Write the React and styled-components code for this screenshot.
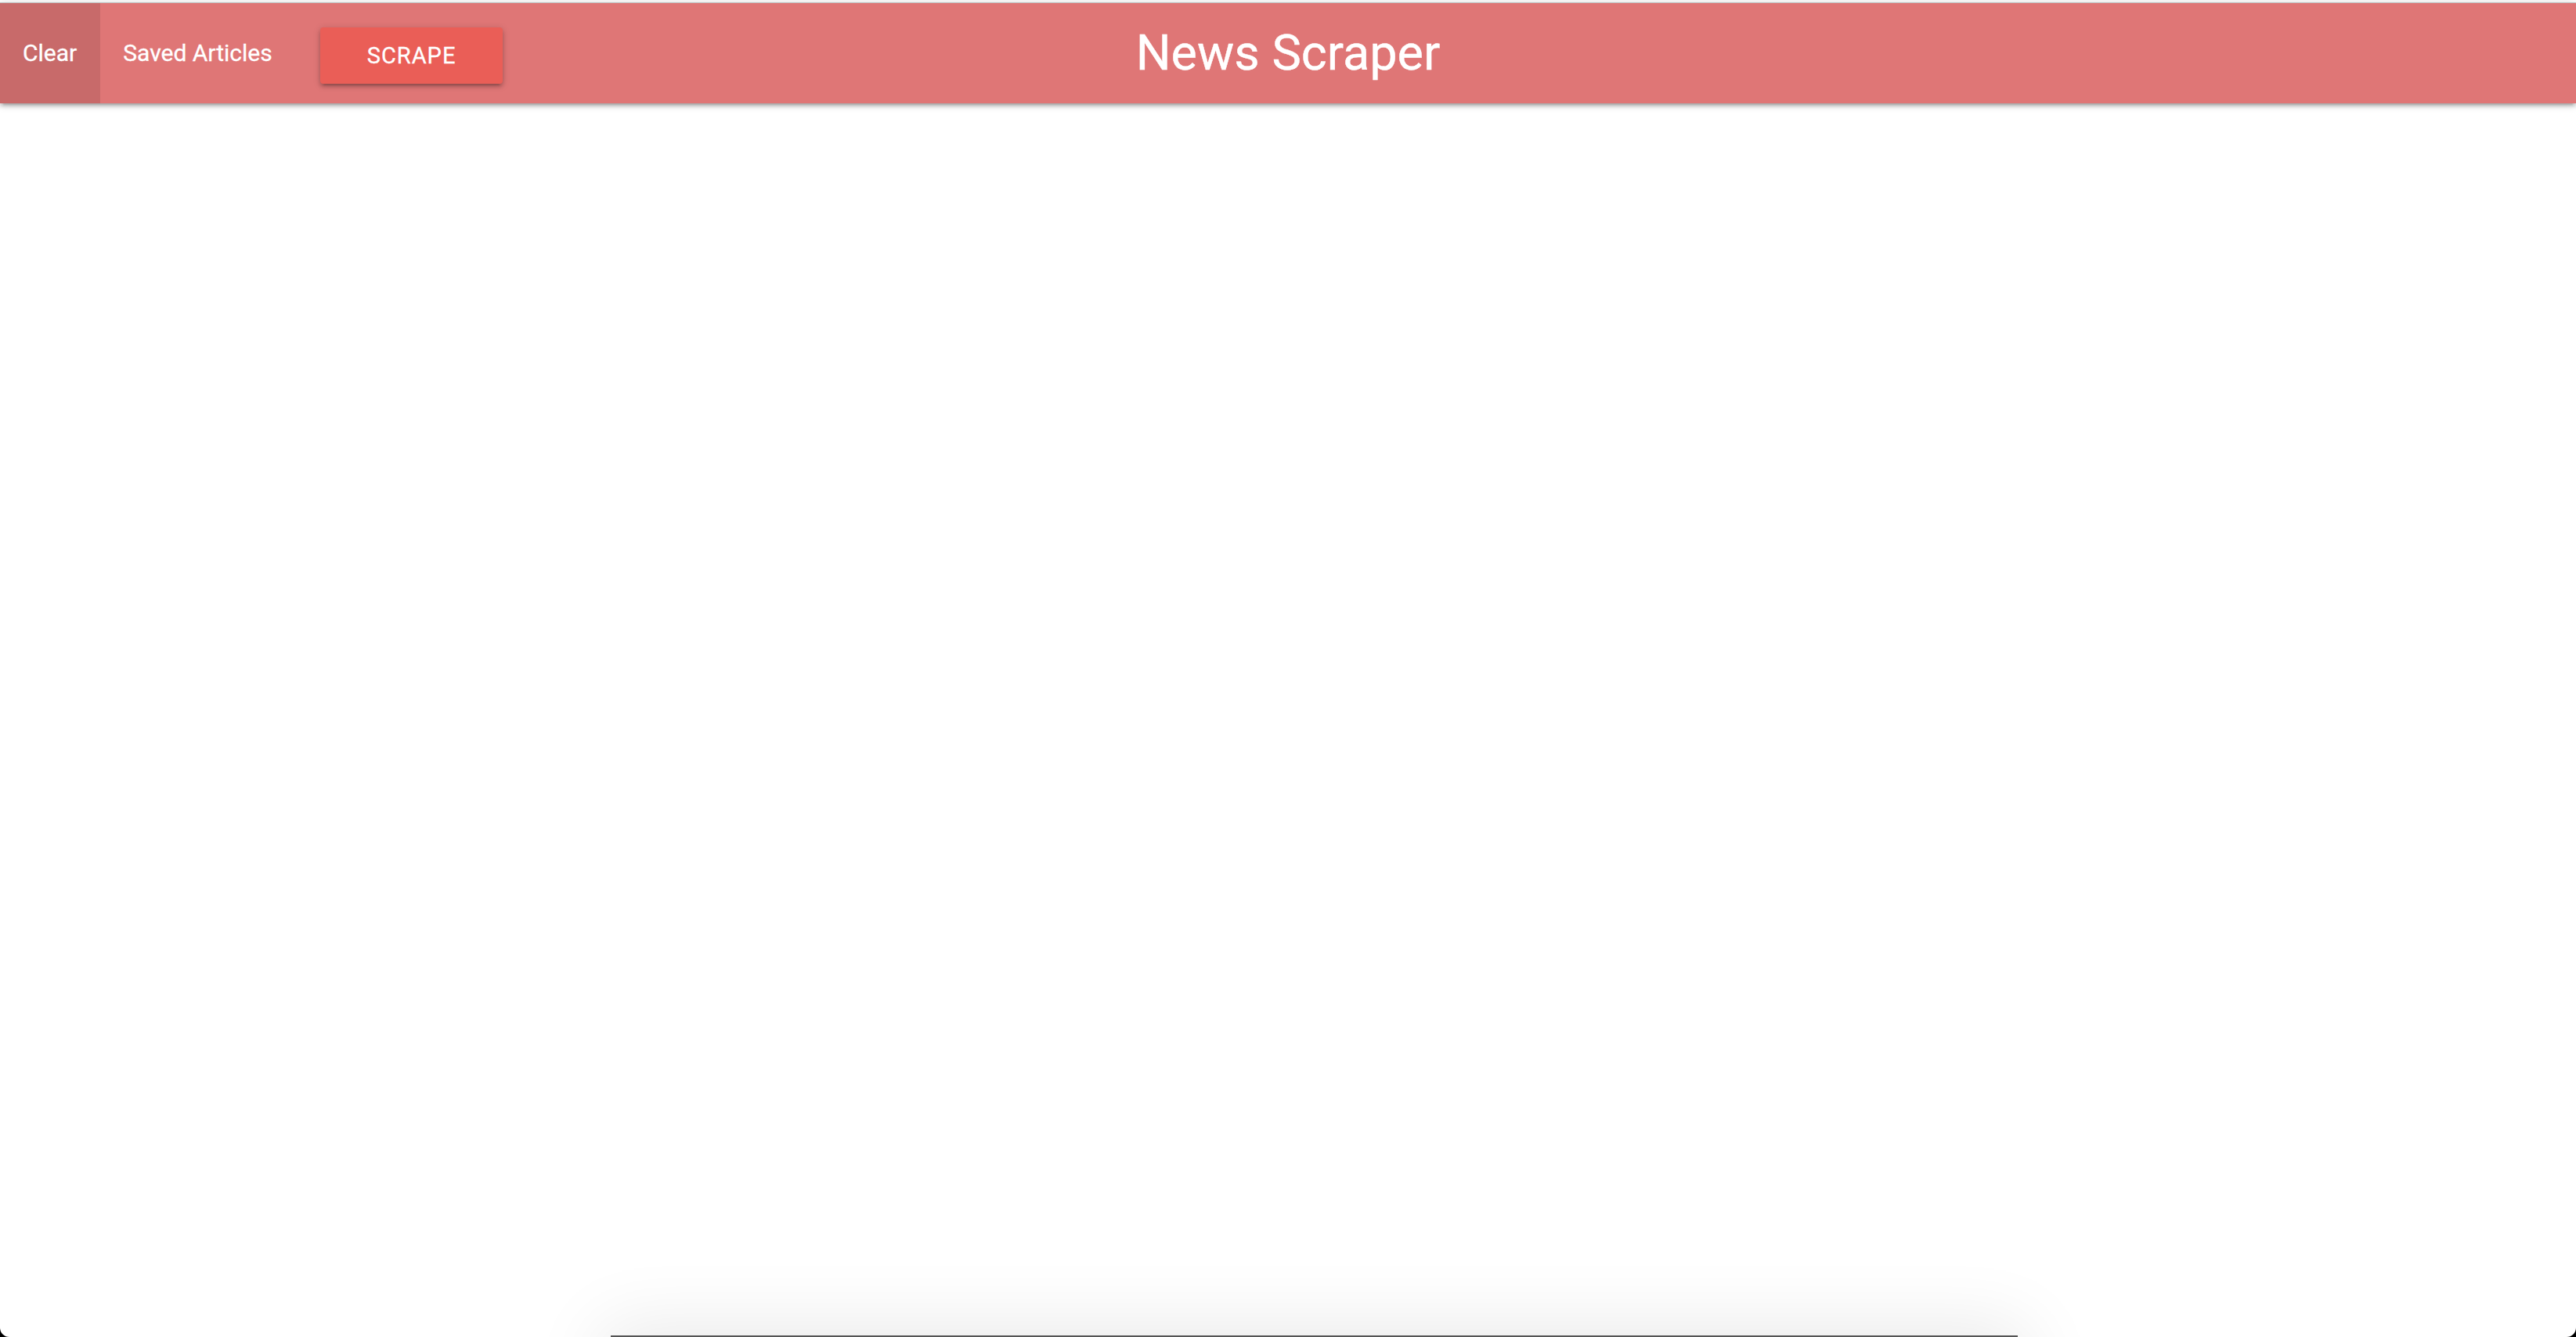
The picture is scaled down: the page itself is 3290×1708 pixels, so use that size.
import React from 'react';
import styled, { createGlobalStyle } from 'styled-components';

const GlobalStyle = createGlobalStyle`
  html, body {
    margin: 0;
    padding: 0;
    background: #ffffff;
    font-family: Roboto, "Liberation Sans", sans-serif;
    overflow: hidden;
  }
`;

const Page = styled.div`
  min-height: 100vh;
  padding-top: 3px;
  box-sizing: border-box;
`;

const Nav = styled.nav`
  display: grid;
  grid-template-columns: 1fr auto 1fr;
  align-items: center;
  height: 128px;
  border-top: 1px solid #bdbdbd;
  background-color: #df7676;
  color: #ffffff;
  box-shadow: 0 4px 4px 0 rgba(0, 0, 0, 0.14), 0 6px 2px -4px rgba(0, 0, 0, 0.12),
    0 2px 10px 0 rgba(0, 0, 0, 0.2);
`;

const Links = styled.ul`
  display: flex;
  align-items: center;
  height: 100%;
  margin: 0;
  padding: 0;
  list-style: none;
`;

const Item = styled.li`
  display: flex;
  align-items: center;
  height: 100%;
  padding: 0 ${p => (p.$wrap ? '31px' : '0')};
  background-color: ${p => (p.$active ? 'rgba(0, 0, 0, 0.1)' : 'transparent')};
`;

const NavLink = styled.a`
  display: block;
  padding: 0 30px 0 29px;
  font-size: 30px;
  line-height: 128px;
  color: #ffffff;
  text-decoration: none;
  -webkit-text-stroke: 0.3px #ffffff;
  cursor: pointer;
`;

const ScrapeButton = styled.button`
  height: 72px;
  margin-top: 5px;
  padding: 0 60px;
  border: none;
  border-radius: 4px;
  background-color: #ea5e57;
  color: #ffffff;
  font-family: Roboto, "Liberation Sans", sans-serif;
  font-size: 29px;
  letter-spacing: 1px;
  text-transform: uppercase;
  -webkit-text-stroke: 0.3px #ffffff;
  box-shadow: 0 4px 4px 0 rgba(0, 0, 0, 0.14), 0 6px 2px -4px rgba(0, 0, 0, 0.12),
    0 2px 10px 0 rgba(0, 0, 0, 0.2);
  cursor: pointer;
`;

const Brand = styled.div`
  font-size: 63px;
  line-height: 128px;
  color: #ffffff;
  white-space: nowrap;
  -webkit-text-stroke: 0.4px #ffffff;
`;

const Modal = styled.div`
  position: fixed;
  top: 1706px;
  left: 780px;
  width: 1797px;
  height: 400px;
  background: #ffffff;
  border-top: 2px solid #555555;
  box-shadow: 0 0 90px 10px rgba(0, 0, 0, 0.09);
`;

const WindowCorners = styled.div`
  position: fixed;
  inset: 0;
  pointer-events: none;
  border-radius: 0 0 12px 12px;
  box-shadow: 0 0 0 40px #000000;
`;

export default function App() {
  return (
    <Page>
      <GlobalStyle />
      <Nav>
        <Links>
          <Item $active>
            <NavLink>Clear</NavLink>
          </Item>
          <Item>
            <NavLink>Saved Articles</NavLink>
          </Item>
          <Item $wrap>
            <ScrapeButton>Scrape</ScrapeButton>
          </Item>
        </Links>
        <Brand>News Scraper</Brand>
        <div />
      </Nav>
      <Modal />
      <WindowCorners />
    </Page>
  );
}
